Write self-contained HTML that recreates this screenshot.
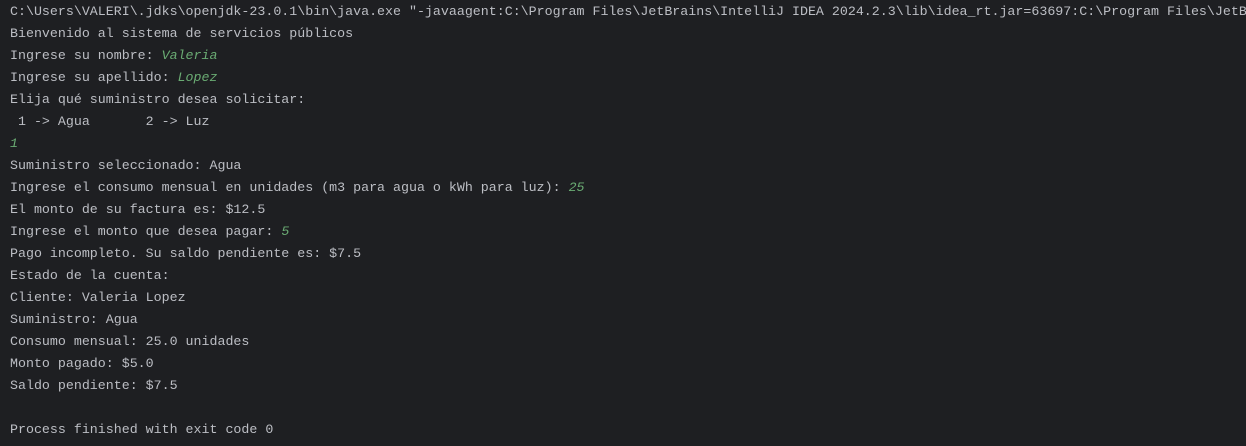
<!DOCTYPE html>
<html><head><meta charset="utf-8"><style>
html,body{margin:0;padding:0;background:#1e1f22;width:1246px;height:446px;overflow:hidden}
pre{margin:0;padding:0 0 0 10px;font-family:"Liberation Mono",monospace;font-size:13.3px;line-height:22px;color:#bcbec4;white-space:pre;position:relative;top:1px;width:1236px;overflow:hidden}
i{color:#6aab73}
</style></head><body><pre>C:\Users\VALERI\.jdks\openjdk-23.0.1\bin\java.exe "-javaagent:C:\Program Files\JetBrains\IntelliJ IDEA 2024.2.3\lib\idea_rt.jar=63697:C:\Program Files\JetBr
Bienvenido al sistema de servicios públicos
Ingrese su nombre: <i>Valeria</i>
Ingrese su apellido: <i>Lopez</i>
Elija qué suministro desea solicitar:
 1 -&gt; Agua       2 -&gt; Luz
<i>1</i>
Suministro seleccionado: Agua
Ingrese el consumo mensual en unidades (m3 para agua o kWh para luz): <i>25</i>
El monto de su factura es: $12.5
Ingrese el monto que desea pagar: <i>5</i>
Pago incompleto. Su saldo pendiente es: $7.5
Estado de la cuenta:
Cliente: Valeria Lopez
Suministro: Agua
Consumo mensual: 25.0 unidades
Monto pagado: $5.0
Saldo pendiente: $7.5

Process finished with exit code 0
</pre></body></html>
